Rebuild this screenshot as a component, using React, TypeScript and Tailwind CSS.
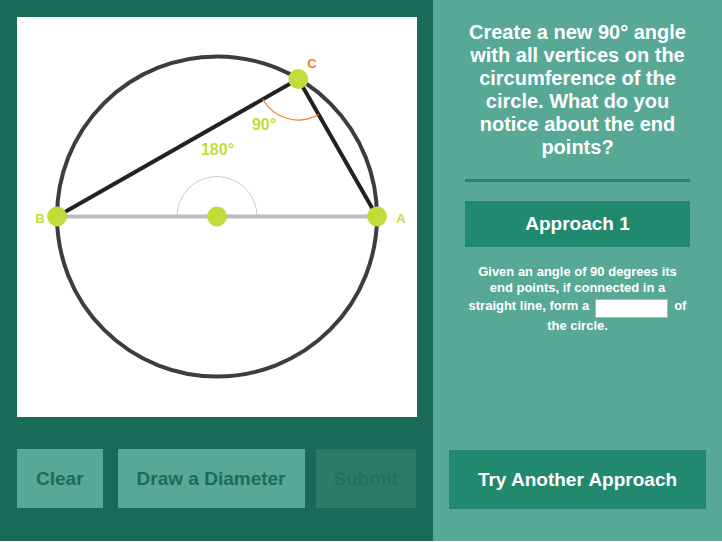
const B = { x: 57, y: 216.5 };
const A = { x: 377, y: 216.5 };
const C = { x: 298.3, y: 79 };
const O = { x: 217, y: 216.5 };

const lime = "#c2dc3a";
const orange = "#f47f20";

const Board = () => (
  <svg width="400" height="400" viewBox="17 17 400 400" className="block">
    {/* circle */}
    <circle cx={O.x} cy={O.y} r="160" fill="none" stroke="#3d3d3d" strokeWidth="4" />
    {/* diameter + half protractor */}
    <path d="M 177 216.5 A 40 40 0 0 1 257 216.5" fill="none" stroke="#c9c9c9" strokeWidth="1" />
    <line x1={B.x} y1={B.y} x2={A.x} y2={A.y} stroke="#bdbdbd" strokeWidth="4" />
    {/* chords */}
    <line x1={B.x} y1={B.y} x2={C.x} y2={C.y} stroke="#222" strokeWidth="4" />
    <line x1={C.x} y1={C.y} x2={A.x} y2={A.y} stroke="#222" strokeWidth="4" />
    {/* angle mark at C */}
    <path d="M 262.7 99.3 A 41 41 0 0 0 318.7 114.5" fill="none" stroke={orange} strokeWidth="1.2" />
    {/* points */}
    <circle cx={B.x} cy={B.y} r="10" fill={lime} />
    <circle cx={A.x} cy={A.y} r="10" fill={lime} />
    <circle cx={C.x} cy={C.y} r="10" fill={lime} />
    <circle cx={O.x} cy={O.y} r="10" fill={lime} />
    {/* labels */}
    <g fontFamily="'Liberation Sans', Arial, sans-serif" fontWeight="bold" textAnchor="middle">
      <text x="40" y="223" fontSize="13" fill={lime}>B</text>
      <text x="401" y="223" fontSize="13" fill={lime}>A</text>
      <text x="312" y="68" fontSize="13" fill={orange}>C</text>
      <text x="264" y="130" fontSize="16" fill={lime}>90°</text>
      <text x="217.5" y="155" fontSize="16" fill={lime}>180°</text>
    </g>
  </svg>
);

export default function App() {
  return (
    <div className="flex h-[541px] w-[722px] font-['Liberation_Sans',Arial,sans-serif]">
      {/* Left: drawing area */}
      <div className="flex w-[433px] flex-col bg-[#196b58] p-[17px]">
        <div className="h-[400px] w-[400px] bg-white">
          <Board />
        </div>
        <div className="mt-[32px] flex h-[59px] text-[19px] font-bold">
          <button className="w-[86px] bg-[#57a894] pt-[2px] text-[#1e6b57]">Clear</button>
          <button className="ml-[15px] w-[188px] bg-[#57a894] pt-[2px] text-[#1e6b57]">Draw a Diameter</button>
          <button className="ml-[11px] w-[101px] bg-[#2d7b66] pt-[2px] text-[#247059]">Submit</button>
        </div>
      </div>

      {/* Right: question */}
      <div className="flex flex-1 flex-col bg-[#57a894] px-[32px] text-white">
        <h2 className="pt-[21px] text-center text-[20px] leading-[23px] font-bold">
          Create a new 90° angle with all vertices on the circumference of the circle. What do you notice about the end points?
        </h2>
        <div className="mt-[20px] h-[3px] bg-[#21896e]" />
        <div className="mt-[19px] flex h-[46px] items-center justify-center bg-[#21896e] text-[19px] font-bold">
          Approach 1
        </div>
        <p className="mt-[17px] text-center text-[13px] leading-[16px] font-bold">
          Given an angle of 90 degrees its end points, if connected in a straight line, form a
          <span className="mx-[6px] mt-[3px] inline-block h-[19px] w-[73px] border border-[#b5b5b5] bg-white align-middle" />
          of the circle.
        </p>
        <button className="mt-auto mb-[32px] -mx-[16px] h-[59px] bg-[#21896e] pt-[2px] text-[19px] font-bold text-white">
          Try Another Approach
        </button>
      </div>
    </div>
  );
}
